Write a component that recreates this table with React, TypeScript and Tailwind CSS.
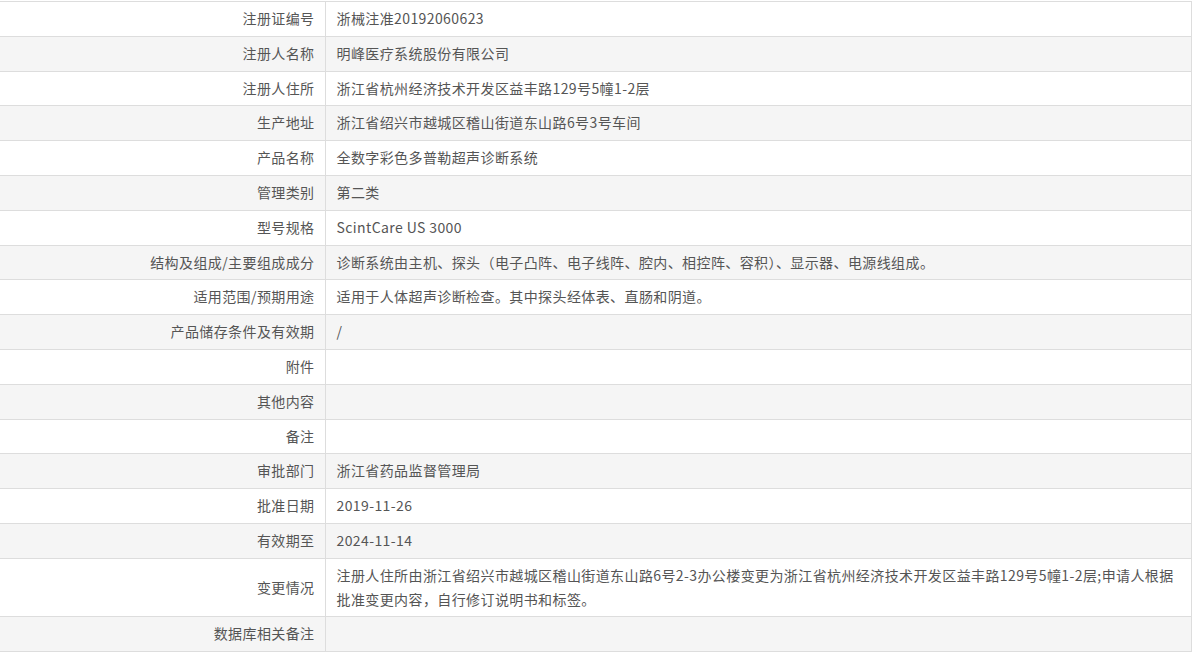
import React from 'react';

const rows: [string, string][] = [
  ['注册证编号', '浙械注准20192060623'],
  ['注册人名称', '明峰医疗系统股份有限公司'],
  ['注册人住所', '浙江省杭州经济技术开发区益丰路129号5幢1-2层'],
  ['生产地址', '浙江省绍兴市越城区稽山街道东山路6号3号车间'],
  ['产品名称', '全数字彩色多普勒超声诊断系统'],
  ['管理类别', '第二类'],
  ['型号规格', 'ScintCare US 3000'],
  ['结构及组成/主要组成成分', '诊断系统由主机、探头（电子凸阵、电子线阵、腔内、相控阵、容积）、显示器、电源线组成。'],
  ['适用范围/预期用途', '适用于人体超声诊断检查。其中探头经体表、直肠和阴道。'],
  ['产品储存条件及有效期', '/'],
  ['附件', ''],
  ['其他内容', ''],
  ['备注', ''],
  ['审批部门', '浙江省药品监督管理局'],
  ['批准日期', '2019-11-26'],
  ['有效期至', '2024-11-14'],
  ['变更情况', '注册人住所由浙江省绍兴市越城区稽山街道东山路6号2-3办公楼变更为浙江省杭州经济技术开发区益丰路129号5幢1-2层;申请人根据批准变更内容，自行修订说明书和标签。'],
  ['数据库相关备注', ''],
];

const App: React.FC = () => {
  return (
    <div className="w-[1200px] h-[656px] bg-white pt-px overflow-hidden" style={{ fontFamily: '"Microsoft YaHei", "Noto Sans CJK SC", sans-serif' }}>
      <table className="w-[1192px] border-collapse table-fixed text-[14px] leading-[23.8px] tracking-[0.4px] text-[#555]">
        <colgroup>
          <col className="w-[325px]" />
          <col />
        </colgroup>
        <tbody>
          {rows.map(([label, value], i) => (
            <tr key={label} className={i % 2 === 0 ? 'bg-white' : 'bg-[#f5f5f5]'}>
              <td className="border border-[#ddd] border-l-0 text-right align-middle py-[5px] pr-[10px]">{label}</td>
              <td className="border border-[#ddd] align-middle py-[5px] pl-[11px] pr-[12px]">{value}</td>
            </tr>
          ))}
        </tbody>
      </table>
    </div>
  );
};

export default App;
